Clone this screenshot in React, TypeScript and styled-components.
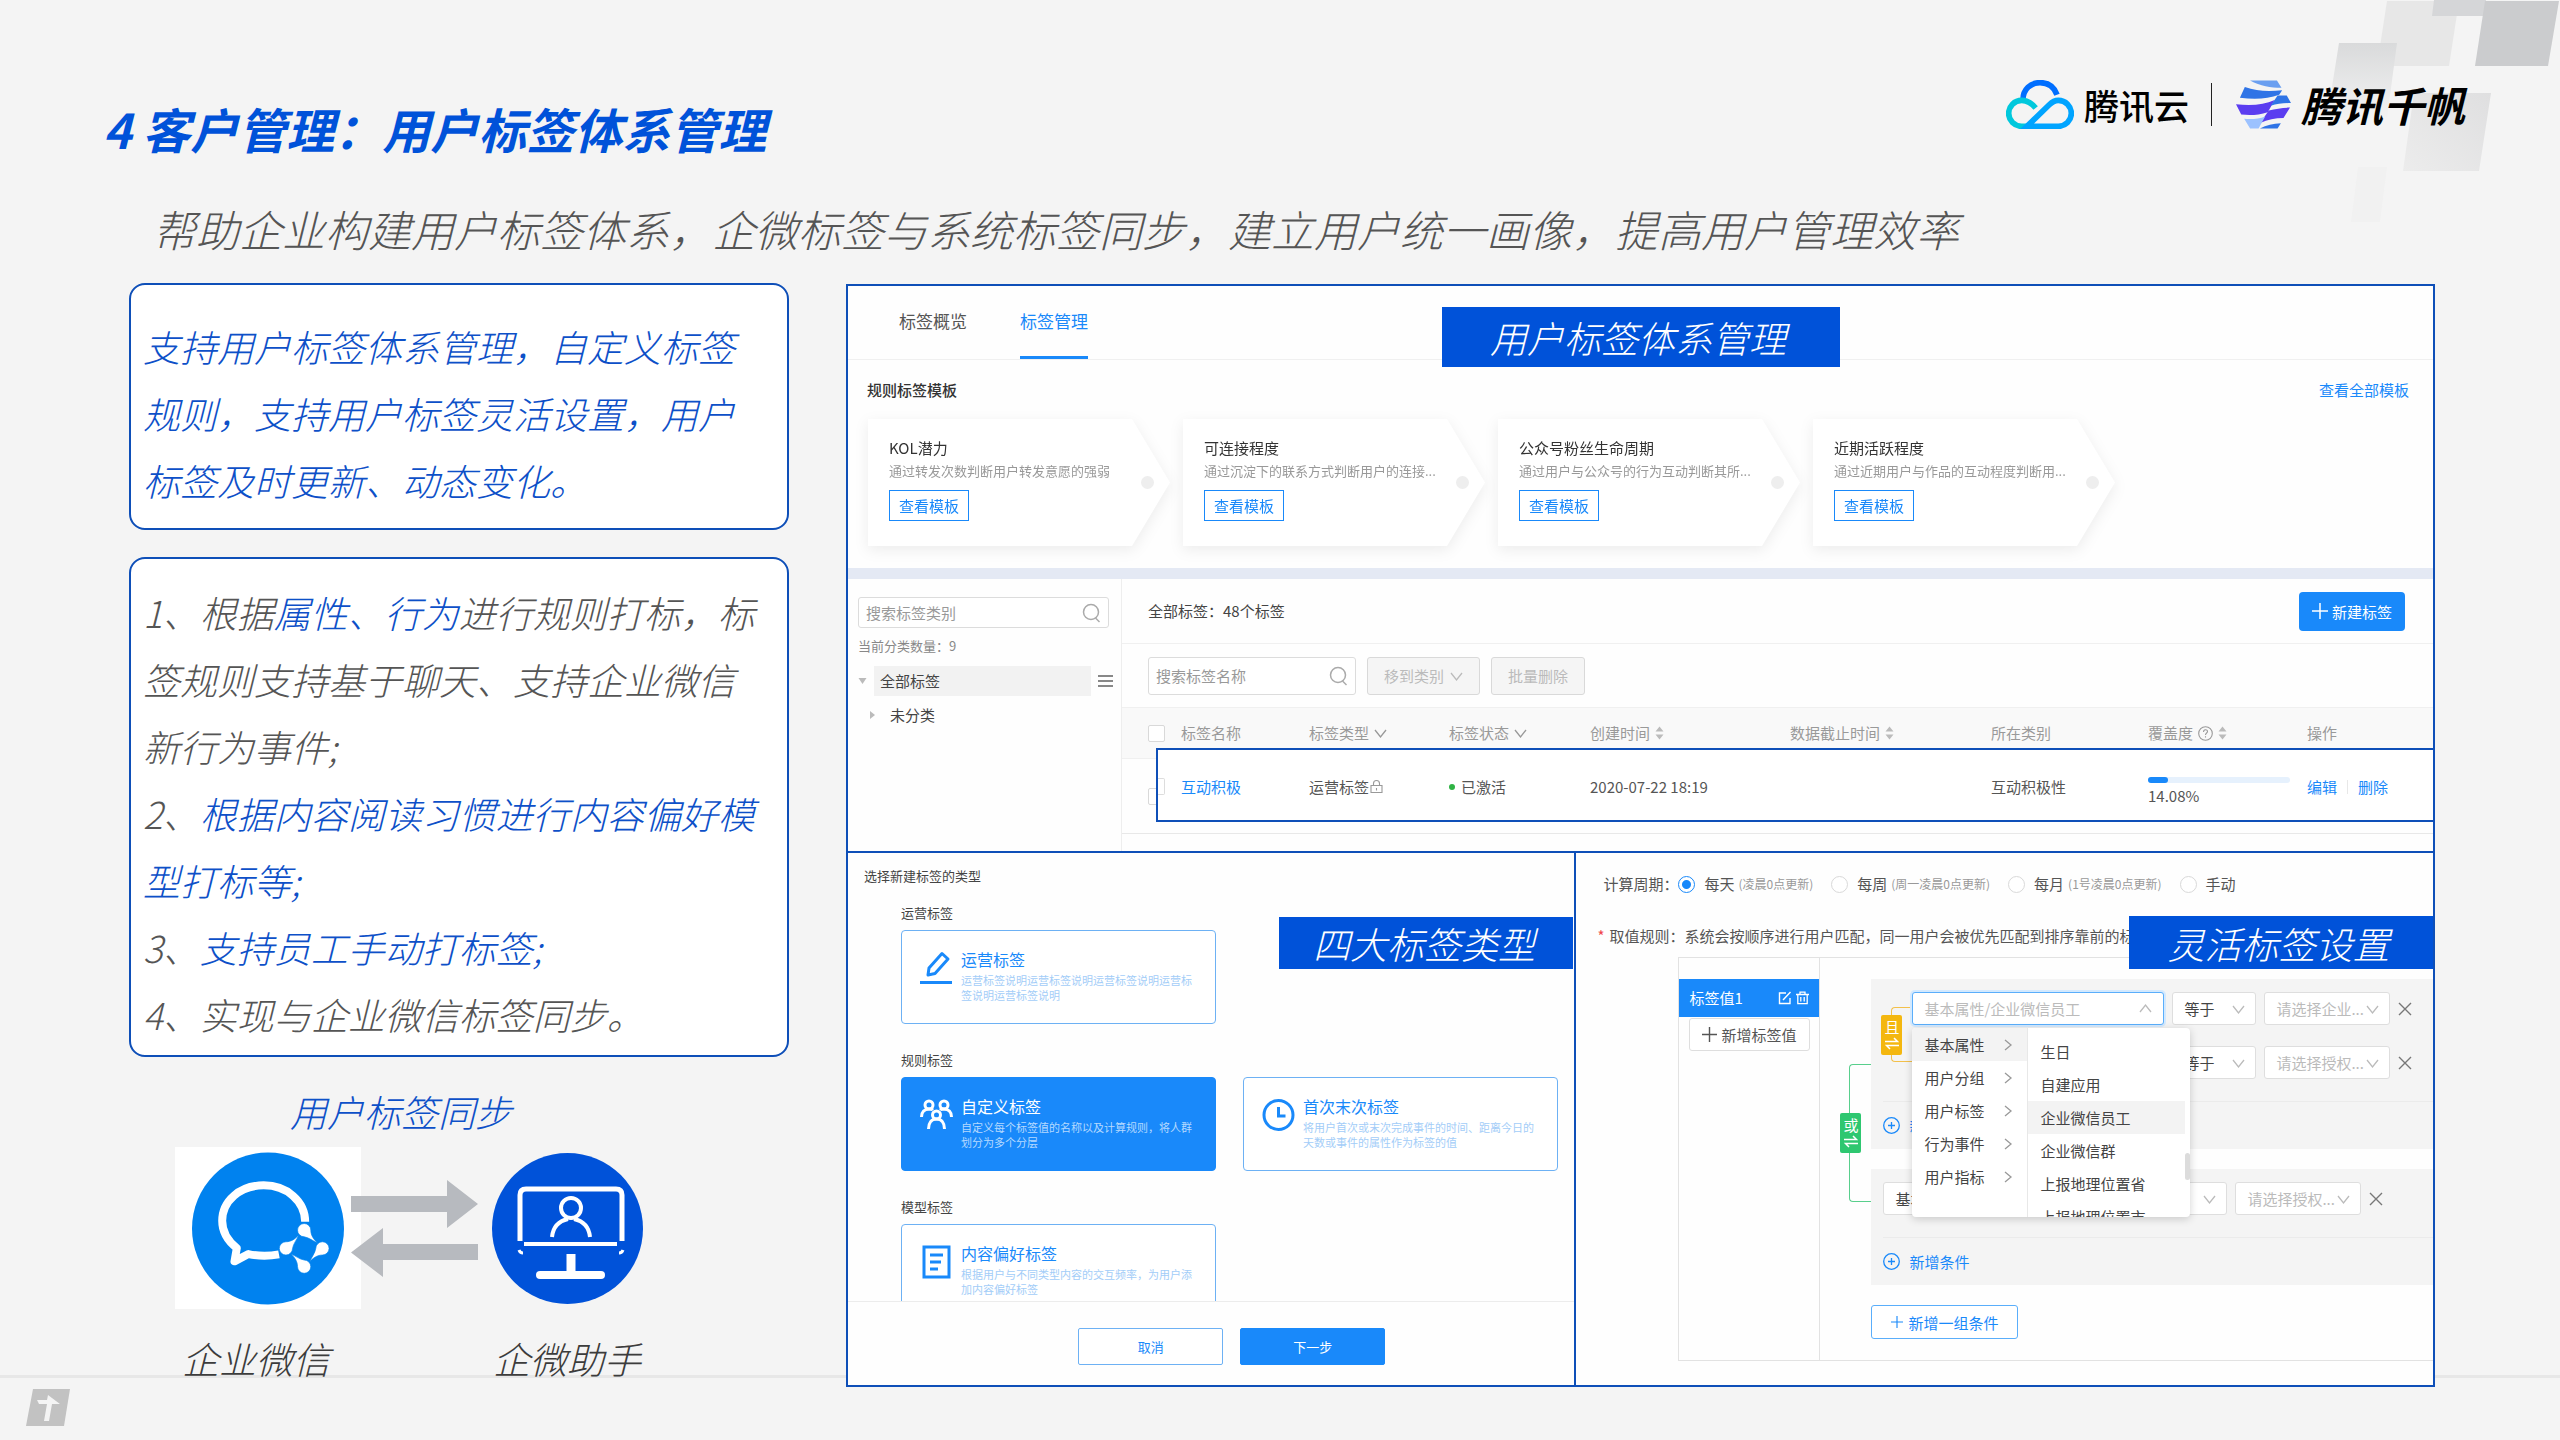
import React from "react";
import styled, { createGlobalStyle, css } from "styled-components";

const brand = "#0052d9";
const outline = "#0e4fb8";
const action = "#1989fa";

const GlobalStyle = createGlobalStyle`
  *, *::before, *::after { box-sizing: border-box; }
  body { margin: 0; background: #f4f4f4; }
  body, button, input, select {
    font-family: "Noto Sans CJK SC", "Noto Sans", sans-serif;
  }
  h1, h2, h3, p, figure, ul { margin: 0; padding: 0; }
  ul { list-style: none; }
  button { cursor: pointer; }
  a { text-decoration: none; }
`;

/* ---------- slide frame ---------- */

const Page = styled.div`
  position: relative;
  min-height: 100vh;
  overflow: hidden;
  background: #f4f4f4;
  color: #555;
`;

const Decor = styled.svg`
  position: absolute;
  top: 0;
  right: 0;
`;

const FooterRule = styled.div`
  position: absolute;
  left: 0;
  right: 0;
  bottom: 62px;
  height: 3px;
  background: #e7e7e7;
`;

const FooterMark = styled.svg`
  position: absolute;
  left: 26px;
  bottom: 13px;
`;

const Header = styled.header`
  position: relative;
  display: flex;
  justify-content: space-between;
  align-items: flex-start;
  padding: 80px 95px 0 103px;
`;

const Title = styled.h1`
  margin-top: 18px;
  font-size: 48px;
  line-height: 60px;
  font-weight: 700;
  font-style: italic;
  color: ${brand};
`;

const Brands = styled.div`
  display: flex;
  align-items: center;
  color: #000;
  white-space: nowrap;
`;

const BrandName = styled.span<{ $heavy?: boolean }>`
  margin-left: 10px;
  font-size: ${(p) => (p.$heavy ? 41 : 35)}px;
  line-height: 49px;
  font-weight: ${(p) => (p.$heavy ? 700 : 500)};
  font-style: ${(p) => (p.$heavy ? "italic" : "normal")};
`;

const BrandRule = styled.span`
  width: 1px;
  height: 43px;
  margin: 0 24px 0 22px;
  background: #222;
`;

const Subtitle = styled.p`
  position: relative;
  margin: 40px 0 0 153px;
  font-size: 43px;
  line-height: 60px;
  font-weight: 300;
  font-style: italic;
`;

const Main = styled.main`
  position: relative;
  display: flex;
  align-items: flex-start;
  gap: 57px;
  margin: 25px 125px 0 129px;
`;

const Side = styled.section`
  flex: 0 0 660px;
`;

const Note = styled.div<{ $blue?: boolean; $tight?: boolean }>`
  padding: ${(p) => (p.$tight ? "20px 0 7px 12px" : "28px 0 14px 12px")};
  border: 2px solid ${outline};
  border-radius: 16px;
  background: #fff;
  font-size: 37px;
  line-height: 67px;
  font-weight: 300;
  font-style: italic;
  white-space: nowrap;
  color: ${(p) => (p.$blue ? "#0d50c8" : "#555")};
  & + & { margin-top: 27px; }
`;

const Em = styled.span`
  color: #0d50c8;
`;

const Sync = styled.div`
  display: grid;
  grid-template-columns: 186px 131px 151px;
  align-items: center;
  margin: 24px 0 0 46px;
`;

const SyncTitle = styled.h2`
  grid-column: 1 / -1;
  padding-right: 16px;
  margin-bottom: 6px;
  font-size: 37px;
  line-height: 60px;
  font-weight: 300;
  font-style: italic;
  text-align: center;
  color: #0d50c8;
`;

const LogoTile = styled.div`
  display: flex;
  justify-content: center;
  align-items: center;
  height: 162px;
  background: #fff;
`;

const Arrows = styled.svg`
  margin-left: -10px;
`;

const SyncLabel = styled.p`
  grid-column: span 2;
  padding-left: 7px;
  margin-top: 19px;
  font-size: 37px;
  line-height: 60px;
  font-weight: 300;
  font-style: italic;
  color: #3c3c3c;
  white-space: nowrap;
  & + & { grid-column: 3; padding-left: 1px; }
`;

/* ---------- product panel ---------- */

const Board = styled.section`
  flex: 1;
  min-width: 0;
  margin-top: 1px;
  border: 2px solid ${outline};
  background: #fefefe;
  font-size: 15px;
  line-height: 22px;
`;

const Pane = styled.div`
  position: relative;
  min-width: 0;
  overflow: hidden;
`;

const Banner = styled.div<{ $kind: "top" | "types" | "rules" }>`
  position: absolute;
  z-index: 5;
  display: flex;
  justify-content: center;
  align-items: center;
  padding-right: 5px;
  background: ${brand};
  color: #fff;
  font-size: 37px;
  font-weight: 300;
  font-style: italic;
  white-space: nowrap;
  ${(p) =>
    p.$kind === "top"
      ? css`top: 21px; left: 50%; width: 398px; height: 60px; margin-left: -199px;`
      : p.$kind === "types"
      ? css`top: 64px; right: 1px; width: 294px; height: 52px;`
      : css`top: 63px; right: 0; width: 304px; height: 53px;`}
`;

const Tabs = styled.nav`
  display: flex;
  gap: 53px;
  height: 74px;
  padding-left: 51px;
  border-bottom: 1px solid #f0f0f0;
`;

const Tab = styled.a<{ $on?: boolean }>`
  height: 73px;
  font-size: 17px;
  line-height: 70px;
  color: ${(p) => (p.$on ? action : "#555")};
  border-bottom: 3px solid ${(p) => (p.$on ? action : "transparent")};
`;

const TemplateHead = styled.div`
  display: flex;
  justify-content: space-between;
  align-items: center;
  height: 59px;
  padding: 0 24px 0 19px;
`;

const TemplateTitle = styled.h2`
  font-size: 15px;
  font-weight: 500;
  color: #333;
`;

const Link = styled.a`
  color: ${action};
`;

const Templates = styled.div`
  display: flex;
  gap: 13px;
  padding: 0 0 22px 20px;
`;

const Shade = styled.div`
  flex: 0 0 302px;
  filter: drop-shadow(0 4px 7px rgba(0, 0, 0, 0.07));
`;

const Arrow = styled.article`
  position: relative;
  height: 127px;
  padding: 18px 0 0 21px;
  background: #fff;
  clip-path: polygon(0 0, calc(100% - 38px) 0, 100% 50%, calc(100% - 38px) 100%, 0 100%);
  &::after {
    content: "";
    position: absolute;
    right: 16px;
    top: 57px;
    width: 13px;
    height: 13px;
    border-radius: 50%;
    background: #eee;
  }
`;

const ArrowTitle = styled.h3`
  font-size: 15px;
  line-height: 22px;
  font-weight: 400;
  color: #333;
`;

const ArrowText = styled.p`
  width: 236px;
  font-size: 13px;
  line-height: 24px;
  color: #999;
  white-space: nowrap;
`;

const ViewButton = styled.button`
  display: block;
  height: 31px;
  margin-top: 7px;
  padding: 0 9px;
  border: 1px solid ${action};
  background: #fff;
  font-size: 15px;
  line-height: 28px;
  color: ${action};
`;

const Strip = styled.div`
  height: 11px;
  background: #e4e9f4;
`;

const Library = styled.div`
  display: flex;
  height: 272px;
`;

const Tree = styled.aside`
  flex: 0 0 274px;
  padding: 18px 12px 0 10px;
  border-right: 1px solid #eee;
  color: #444;
`;

const SearchBox = styled.label<{ $h: number; $w?: number }>`
  display: flex;
  align-items: center;
  width: ${(p) => (p.$w ? p.$w + "px" : "auto")};
  height: ${(p) => p.$h}px;
  padding: 0 7px;
  border: 1px solid #dcdcdc;
  border-radius: 3px;
  background: #fff;
  input {
    flex: 1;
    min-width: 0;
    padding: 0;
    border: 0;
    outline: 0;
    background: none;
    font-size: 15px;
    &::placeholder { color: #999; opacity: 1; }
  }
`;

const Count = styled.p`
  margin-top: 7px;
  font-size: 13px;
  color: #888;
`;

const TreeRow = styled.div<{ $child?: boolean }>`
  display: flex;
  align-items: center;
  height: 30px;
  margin: ${(p) => (p.$child ? "4px 0 0 12px" : "9px -4px 0 0")};
`;

const TreeLabel = styled.span<{ $on?: boolean }>`
  width: ${(p) => (p.$on ? "217px" : "auto")};
  height: 30px;
  margin-left: ${(p) => (p.$on ? 7 : 9)}px;
  padding-left: 6px;
  line-height: 30px;
  background: ${(p) => (p.$on ? "#f2f2f2" : "none")};
`;

const MenuIcon = styled.svg`
  margin-left: auto;
`;

const Detail = styled.div`
  flex: 1;
  min-width: 0;
`;

const DetailHead = styled.div`
  display: flex;
  justify-content: space-between;
  align-items: center;
  height: 65px;
  padding: 0 28px 0 26px;
  border-bottom: 1px solid #f0f0f0;
  color: #444;
`;

const CreateButton = styled.button`
  display: flex;
  align-items: center;
  gap: 4px;
  height: 39px;
  padding: 0 13px;
  border: 0;
  border-radius: 4px;
  background: ${action};
  color: #fff;
  font-size: 15px;
`;

const Filters = styled.div`
  display: flex;
  align-items: center;
  gap: 11px;
  height: 63px;
  padding-left: 26px;
`;

const GreyButton = styled.button`
  display: flex;
  align-items: center;
  gap: 6px;
  height: 38px;
  padding: 0 16px;
  border: 1px solid #d9d9d9;
  border-radius: 3px;
  background: #f5f5f5;
  color: #bbb;
  font-size: 15px;
`;

const TableWrap = styled.div`
  position: relative;
`;

const Highlight = styled.div`
  position: absolute;
  z-index: 1;
  top: 41px;
  left: 34px;
  right: 0;
  height: 74px;
  border: 2px solid ${outline};
  border-right: 0;
  background: #fff;
  &::before {
    content: "";
    position: absolute;
    left: 0;
    top: 28px;
    width: 7px;
    height: 17px;
    border: 1px solid #ddd;
    border-left: 0;
    border-radius: 0 2px 2px 0;
  }
`;

const Table = styled.table`
  width: 100%;
  table-layout: fixed;
  border-collapse: collapse;
  th, td {
    padding: 0;
    text-align: left;
    font-weight: 400;
    white-space: nowrap;
  }
  th { height: 51px; background: #f9f9f9; color: #999; border: 1px solid #f0f0f0; border-width: 1px 0; }
  td { height: 75px; border-bottom: 1px solid #e8e8e8; color: #555; }
`;

const Cell = styled.div`
  position: relative;
  z-index: 2;
  display: flex;
  align-items: center;
  margin-bottom: 19px;
`;

const HeadCell = styled.div`
  display: flex;
  align-items: center;
  gap: 5px;
`;

const Tick = styled.input`
  appearance: none;
  display: block;
  width: 17px;
  height: 17px;
  margin: 0 0 0 26px;
  border: 1px solid #d9d9d9;
  border-radius: 2px;
  background: #fff;
`;

const Dot = styled.span`
  width: 6px;
  height: 6px;
  margin-right: 6px;
  border-radius: 50%;
  background: #2fb344;
`;

const Meter = styled.div`
  position: relative;
  z-index: 2;
  width: 142px;
  margin-bottom: 17px;
`;

const Track = styled.div`
  height: 6px;
  margin: 8px 0 2px;
  border-radius: 3px;
  background: #e6f1fd;
  div { height: 6px; border-radius: 3px; background: ${action}; }
`;

const Split = styled.span`
  width: 1px;
  height: 14px;
  margin: 0 10px;
  background: #e8e8e8;
`;

const Lower = styled.div`
  display: grid;
  grid-template-columns: 728fr 856fr;
  border-top: 2px solid ${outline};
  height: 534px;
`;

/* ---------- tag types ---------- */

const TypesPane = styled(Pane)`
  border-right: 2px solid ${outline};
`;

const TypesTitle = styled.h2`
  padding: 13px 0 0 16px;
  font-size: 13px;
  line-height: 20px;
  font-weight: 400;
  color: #444;
`;

const TypesBody = styled.div`
  height: 415px;
  padding: 17px 0 0 53px;
  overflow: hidden;
`;

const TypesGroup = styled.section`
  margin-bottom: 26px;
  h3 {
    margin-bottom: 7px;
    font-size: 13px;
    line-height: 20px;
    font-weight: 400;
    color: #444;
  }
`;

const TypesRow = styled.div`
  display: flex;
  gap: 27px;
`;

const TypeCard = styled.button<{ $on?: boolean }>`
  display: flex;
  align-items: flex-start;
  gap: 8px;
  width: 315px;
  height: 94px;
  padding: 16px 0 0 18px;
  border: 1px solid ${(p) => (p.$on ? action : "#6db1f4")};
  border-radius: 4px;
  background: ${(p) => (p.$on ? action : "#fff")};
  color: ${(p) => (p.$on ? "#fff" : action)};
  text-align: left;
  svg { flex: none; margin-top: 4px; }
  strong { display: block; font-size: 16px; line-height: 24px; font-weight: 400; }
  small {
    display: block;
    margin-top: 2px;
    font-size: 11px;
    line-height: 15px;
    white-space: nowrap;
    color: ${(p) => (p.$on ? "#b5d9ff" : "#a3cdf8")};
  }
`;

const TypesFoot = styled.footer`
  display: flex;
  justify-content: center;
  gap: 17px;
  padding: 26px 0 0 41px;
  border-top: 1px solid #ececec;
`;

const WideButton = styled.button<{ $solid?: boolean }>`
  width: 145px;
  height: 37px;
  border: 1px solid ${(p) => (p.$solid ? action : "#6db1f4")};
  border-radius: 2px;
  background: ${(p) => (p.$solid ? action : "#fff")};
  color: ${(p) => (p.$solid ? "#fff" : action)};
  font-size: 13px;
`;

/* ---------- rule settings ---------- */

const Cycle = styled.fieldset`
  display: flex;
  align-items: center;
  height: 22px;
  margin: 20px 0 0 27px;
  padding: 0;
  border: 0;
  white-space: nowrap;
`;

const Choice = styled.label`
  display: flex;
  align-items: center;
  margin-right: 18px;
  input {
    appearance: none;
    width: 17px;
    height: 17px;
    margin: 0 9px 0 0;
    border: 1px solid #d9d9d9;
    border-radius: 50%;
    background: #fff;
  }
  input:checked {
    border-color: ${action};
    background: radial-gradient(circle, ${action} 4px, #fff 5px);
  }
  small { margin-left: 4px; font-size: 12px; color: #999; }
`;

const RuleLine = styled.p`
  display: flex;
  margin: 30px 0 0 21px;
  white-space: nowrap;
  i { margin-right: 5px; font-style: normal; color: #f0454a; }
  span { flex: 0 0 69px; }
`;

const Builder = styled.div`
  display: flex;
  height: 404px;
  margin: 10px 0 0 102px;
  border: 1px solid #e2e2e2;
  border-right: 0;
`;

const Values = styled.div`
  flex: 0 0 141px;
  padding-top: 21px;
  border-right: 1px solid #e2e2e2;
`;

const ValueItem = styled.div`
  display: flex;
  align-items: center;
  height: 38px;
  padding: 0 10px;
  background: ${action};
  color: #fff;
  font-size: 15px;
  span { flex: 1; }
  svg { margin-left: 4px; }
`;

const AddValue = styled.button`
  display: flex;
  justify-content: center;
  align-items: center;
  gap: 4px;
  width: 121px;
  height: 33px;
  margin: 1px auto 0;
  border: 1px solid #dedede;
  border-radius: 3px;
  background: #fff;
  color: #555;
  font-size: 15px;
  padding: 0;
`;

const Conditions = styled.div`
  position: relative;
  flex: 1;
  min-width: 0;
  padding: 21px 0 0 51px;
`;

const Bracket = styled.div<{ $or?: boolean }>`
  position: absolute;
  left: ${(p) => (p.$or ? 29 : 20)}px;
  top: ${(p) => (p.$or ? 106 : 28)}px;
  width: 22px;
  height: ${(p) => (p.$or ? 138 : 55)}px;
  border: 1px solid ${(p) => (p.$or ? "#58cf8c" : "#f3c04a")};
  border-right: 0;
  border-radius: 4px 0 0 4px;
`;

const Joiner = styled.button<{ $or?: boolean }>`
  position: absolute;
  left: ${(p) => (p.$or ? 20 : 10)}px;
  top: ${(p) => (p.$or ? 155 : 36)}px;
  display: flex;
  flex-direction: column;
  align-items: center;
  width: 21px;
  height: 40px;
  padding: 2px 0 0;
  border: 0;
  border-radius: 2px;
  background: ${(p) => (p.$or ? "#2ec770" : "#f4b70f")};
  color: #fff;
  font-size: 15px;
  line-height: 20px;
`;

const Group = styled.div<{ $flat?: boolean }>`
  position: relative;
  margin-bottom: 20px;
  padding: 13px 0 0 ${(p) => (p.$flat ? 12 : 41)}px;
  background: #f4f4f4;
`;

const Condition = styled.div`
  display: flex;
  align-items: center;
  gap: 8px;
  margin-bottom: 21px;
`;

const Picker = styled.div<{ $w: number; $focus?: boolean }>`
  position: relative;
  flex: 0 0 ${(p) => p.$w}px;
  height: 33px;
  select {
    appearance: none;
    display: block;
    width: 100%;
    height: 33px;
    padding: 0 0 0 11px;
    border: 1px solid ${(p) => (p.$focus ? "#5aaefb" : "#dedede")};
    border-radius: 3px;
    outline: 0;
    background: #fff;
    box-shadow: ${(p) => (p.$focus ? "0 0 0 2px #d3e9fe" : "none")};
    color: #bbb;
    font-size: 15px;
  }
  svg { position: absolute; right: ${(p) => (p.$focus ? 12 : 11)}px; top: 11px; }
`;

const DarkPicker = styled(Picker)`
  select { color: #444; }
`;

const Remove = styled.button`
  display: flex;
  padding: 0;
  border: 0;
  background: none;
`;

const GroupFoot = styled.div<{ $flat?: boolean }>`
  height: 48px;
  margin-top: 22px;
  margin-left: ${(p) => (p.$flat ? 0 : -29)}px;
  border-top: 1px solid #ebebeb;
`;

const AddCondition = styled.button`
  display: flex;
  align-items: center;
  gap: 9px;
  height: 46px;
  padding: 0;
  border: 0;
  background: none;
  color: ${action};
  font-size: 15px;
`;

const AddGroup = styled.button`
  display: flex;
  justify-content: center;
  align-items: center;
  gap: 5px;
  width: 147px;
  height: 34px;
  padding: 0;
  border: 1px solid #5aaefb;
  border-radius: 3px;
  background: #fff;
  color: ${action};
  font-size: 15px;
`;

const Menu = styled.div`
  position: absolute;
  z-index: 3;
  left: 92px;
  top: 70px;
  display: flex;
  width: 278px;
  height: 189px;
  overflow: hidden;
  border-radius: 4px;
  background: #fff;
  box-shadow: 0 2px 8px rgba(0, 0, 0, 0.18);
  color: #444;
`;

const MenuColumn = styled.ul<{ $sub?: boolean }>`
  position: relative;
  flex: ${(p) => (p.$sub ? "1" : "0 0 116px")};
  padding: ${(p) => (p.$sub ? "7px 5px 0 0" : "0")};
  border-right: ${(p) => (p.$sub ? "0" : "1px solid #e8e8e8")};
  &::after {
    content: "";
    display: ${(p) => (p.$sub ? "block" : "none")};
    position: absolute;
    right: 0;
    top: 125px;
    width: 5px;
    height: 27px;
    border-radius: 3px;
    background: #dcdcdc;
  }
`;

const MenuItem = styled.li<{ $on?: boolean }>`
  display: flex;
  justify-content: space-between;
  align-items: center;
  height: 33px;
  padding: 0 13px 0 12px;
  background: ${(p) => (p.$on ? "#f3f3f3" : "transparent")};
  white-space: nowrap;
`;

/* ---------- icons ---------- */

const Lens = () => (
  <svg width="19" height="20" viewBox="0 0 19 20" fill="none" stroke="#aaa" strokeWidth="1.5">
    <circle cx="9" cy="9" r="7.5" />
    <path d="M13.5 15l4 4" />
  </svg>
);

const Chevron = ({ dir = "down", color = "#bbb" }: { dir?: "down" | "up" | "right"; color?: string }) => {
  const paths = { down: "M1 3l5.5 7L12 3", up: "M1 9l5.5-7L12 9", right: "M4 1l6 5-6 5" };
  return (
    <svg width="13" height="12" viewBox="0 0 13 12" fill="none" stroke={color} strokeWidth="1.3">
      <path d={paths[dir]} />
    </svg>
  );
};

const Sorter = () => (
  <svg width="9" height="14" viewBox="0 0 9 14" fill="#bbb">
    <path d="M4.500 0.500L8.500 5.500H0.500zM4.500 13.500L0.500 8.500H8.500z" />
  </svg>
);

const Plus = ({ size = 15 }: { size?: number }) => (
  <svg width={size} height={size} viewBox="0 0 16 16" fill="none" stroke="currentColor" strokeWidth="1.5">
    <path d="M8 0v16M0 8h16" />
  </svg>
);

const CirclePlus = () => (
  <svg width="17" height="17" viewBox="0 0 17 17" fill="none" stroke="currentColor" strokeWidth="1.3">
    <circle cx="8.500" cy="8.500" r="7.800" />
    <path d="M8.500 5v7M5 8.500h7" />
  </svg>
);

const Cross = () => (
  <svg width="14" height="14" viewBox="0 0 14 14" fill="none" stroke="#777" strokeWidth="1.4">
    <path d="M1 1l12 12M13 1L1 13" />
  </svg>
);

const Swap = () => (
  <svg width="14" height="13" viewBox="0 0 14 13" fill="none" stroke="currentColor" strokeWidth="1.5">
    <path d="M0 4.500h12.500L9 1M14 8.500H1.500L5 12" />
  </svg>
);

const CloudLogo = () => (
  <svg width="68" height="49" viewBox="36 33 202 147" fill="none" strokeWidth="17">
    <path d="M86 92C86 61 109 41 137 41c25 0 43 14 51 36" stroke="#006eff" />
    <path d="M124 117C112 102 99 94 82 94a39 39 0 0 0 0 78h22" stroke="#00c8dc" />
    <path d="M98 172l66-64c9-9 18-14 28-14a39 39 0 0 1 0 78z" stroke="#00a4ff" />
  </svg>
);

const SailLogo = () => (
  <svg width="55" height="49" viewBox="723 33 168 147">
    <path d="M766 33h82l14 22c-34 0-64-4-96-22z" fill="#6a9ff0" />
    <path d="M750 53c35 13 72 15 114 10l-9 14c-36 13-75 15-120 9z" fill="#2f74e6" />
    <path d="M723 106c47 5 85 2 118-13l-21 37c-28 9-55 10-81 7z" fill="#5b3df0" />
    <path d="M850 79h28l13 23c-24 0-42 3-62 8z" fill="#2f74e6" />
    <path d="M823 125c22-6 42-8 65-9l-20 32c-26 0-48 5-71 15z" fill="#5b3df0" />
    <path d="M748 150c24 2 45 0 64-7l-20 37h-26z" fill="#9cc2ff" />
    <path d="M796 180c20-10 40-15 64-16l-10 16z" fill="#2f74e6" />
  </svg>
);

const dropPath =
  "M402 253a20 20 0 0 1 20 20c0 16 9 28 20 38-14-5-26-16-40-18a20 20 0 0 1 0-40z";

const ChatLogo = () => (
  <svg width="152" height="153" viewBox="64 38 458 460">
    <circle cx="293" cy="268" r="229" fill="#0082ef" />
    <path
      d="M405 248C405 186 350 138 280 138c-72 0-125 47-125 107 0 35 17 61 44 82l-7 40 42-22c28 6 60 7 92 1"
      fill="none"
      stroke="#fff"
      strokeWidth="24"
      strokeLinejoin="round"
    />
    <g fill="#fff" stroke="#0082ef" strokeWidth="2">
      {[0, 90, 180, 270].map((a) => (
        <path key={a} d={dropPath} transform={`rotate(${a} 402 328)`} />
      ))}
    </g>
  </svg>
);

const AssistantLogo = () => (
  <svg width="151" height="151" viewBox="0 0 151 151" fill="none" stroke="#fff">
    <circle cx="75.500" cy="75.500" r="75.500" fill={brand} stroke="none" />
    <path d="M28 88V42q0-6 6-6h90q6 0 6 6v46" strokeWidth="5" />
    <path d="M27 97q1 3 4 3M131 97q-1 3-4 3" strokeWidth="3" />
    <path d="M32 91h93" strokeWidth="4" />
    <path d="M79 101v17" strokeWidth="9" />
    <path d="M48 122h61" strokeWidth="8" strokeLinecap="round" />
    <circle cx="79" cy="55" r="10" strokeWidth="4" />
    <path d="M60 84c1-10 7-16 16-18M98 84c-1-10-7-16-16-18" strokeWidth="4" />
  </svg>
);

const PencilIcon = () => (
  <svg width="33" height="34" viewBox="0 0 33 34" fill="none" stroke="currentColor" strokeWidth="3">
    <path d="M22 2.500l6 5.500-13 14.500-7 1.500 1-7z" strokeLinejoin="round" />
    <path d="M0 31.500h32" />
  </svg>
);

const PeopleIcon = () => (
  <svg width="33" height="34" viewBox="0 0 33 34" fill="none" stroke="currentColor" strokeWidth="3">
    <circle cx="9" cy="7" r="4" />
    <circle cx="24" cy="7" r="4" />
    <circle cx="16.500" cy="17" r="4" />
    <path d="M1.500 19c0-5 3-8 7.500-8 2 0 3 0 4 1M31.500 19c0-5-3-8-7.500-8-2 0-3 0-4 1M8.500 31c0-6 3-10 8-10s8 4 8 10" />
  </svg>
);

const ClockIcon = () => (
  <svg width="33" height="34" viewBox="0 0 33 34" fill="none" stroke="currentColor" strokeWidth="3">
    <circle cx="16.500" cy="17" r="14.500" />
    <path d="M16.500 9v9h7" />
  </svg>
);

const DocIcon = () => (
  <svg width="33" height="34" viewBox="0 0 33 34" fill="none" stroke="currentColor" strokeWidth="3">
    <rect x="4" y="2" width="25" height="30" />
    <path d="M10 10h13M10 17h11M10 24h8" />
  </svg>
);

/* ---------- data ---------- */

const templates = [
  ["KOL潜力", "通过转发次数判断用户转发意愿的强弱"],
  ["可连接程度", "通过沉淀下的联系方式判断用户的连接..."],
  ["公众号粉丝生命周期", "通过用户与公众号的行为互动判断其所..."],
  ["近期活跃程度", "通过近期用户与作品的互动程度判断用..."],
];

const columns: [number, string, React.ReactNode][] = [
  [128, "标签名称", null],
  [140, "标签类型", <Chevron key="c" color="#999" />],
  [141, "标签状态", <Chevron key="c" color="#999" />],
  [200, "创建时间", <Sorter key="s" />],
  [201, "数据截止时间", <Sorter key="s" />],
  [157, "所在类别", null],
  [159, "覆盖度", null],
];

const coverage = 14.08;

const cycles = [
  ["每天", "(凌晨0点更新)"],
  ["每周", "(周一凌晨0点更新)"],
  ["每月", "(1号凌晨0点更新)"],
  ["手动", ""],
];

const Select = ({ w, text, label, dark, focus }: { w: number; text: string; label: string; dark?: boolean; focus?: boolean }) => {
  const Shell = dark ? DarkPicker : Picker;
  return (
    <Shell $w={w} $focus={focus}>
      <select aria-label={label}>
        <option>{text}</option>
      </select>
      <Chevron dir={focus ? "up" : "down"} />
    </Shell>
  );
};

const RemoveButton = () => (
  <Remove aria-label="删除条件">
    <Cross />
  </Remove>
);

export default function App() {
  return (
    <Page>
      <GlobalStyle />
      <Decor width="240" height="230" viewBox="0 0 240 230">
        <defs>
          <linearGradient id="fadeA" x1="0" y1="0" x2="0" y2="1">
            <stop offset="0" stopColor="#d9dadb" />
            <stop offset="1" stopColor="#f3f3f3" />
          </linearGradient>
          <linearGradient id="fadeB" x1="1" y1="0" x2="0" y2="1">
            <stop offset="0" stopColor="#dfdfe0" />
            <stop offset="1" stopColor="#ececec" />
          </linearGradient>
        </defs>
        <path d="M67 1h72l-10 65H57z" fill="#e7e7e7" />
        <path d="M114 0h52l-2 16h-52z" fill="#d5d6d8" />
        <path d="M165 1h74l-11 65h-73z" fill="#cbccce" />
        <path d="M19 43h58L67 118H7z" fill="url(#fadeA)" />
        <path d="M94 93h77l-12 78H83z" fill="url(#fadeB)" />
        <path d="M38 167h29l-7 55H31z" fill="#f1f1f1" />
      </Decor>
      <FooterRule />
      <FooterMark width="45" height="38" viewBox="0 0 45 38">
        <path d="M7 0h37l-6 37H0z" fill="#c2c2c2" />
        <path d="M22 6l12 9h-8l-3 17h-5l3-17h-8l-2-4h10z" fill="#f4f4f4" />
      </FooterMark>

      <Header>
        <Title>4 客户管理：用户标签体系管理</Title>
        <Brands>
          <CloudLogo />
          <BrandName>腾讯云</BrandName>
          <BrandRule />
          <SailLogo />
          <BrandName $heavy>腾讯千帆</BrandName>
        </Brands>
      </Header>
      <Subtitle>帮助企业构建用户标签体系，企微标签与系统标签同步，建立用户统一画像，提高用户管理效率</Subtitle>

      <Main>
        <Side>
          <Note $blue>
            支持用户标签体系管理，自定义标签
            <br />
            规则，支持用户标签灵活设置，用户
            <br />
            标签及时更新、动态变化。
          </Note>
          <Note $tight>
            1、根据<Em>属性、行为</Em>进行规则打标，标
            <br />
            签规则支持基于聊天、支持企业微信
            <br />
            新行为事件;
            <br />
            2、<Em>根据内容阅读习惯进行内容偏好模</Em>
            <br />
            <Em>型打标等;</Em>
            <br />
            3、<Em>支持员工手动打标签;</Em>
            <br />
            4、实现与企业微信标签同步。
          </Note>
          <Sync>
            <SyncTitle>用户标签同步</SyncTitle>
            <LogoTile>
              <ChatLogo />
            </LogoTile>
            <Arrows width="127" height="97" viewBox="0 0 127 97" fill="#b7babf">
              <path d="M0 16h96V0l31 24-31 24V32H0zM127 64H32V48L0 72.500 32 97V80h95z" />
            </Arrows>
            <AssistantLogo />
            <SyncLabel>企业微信</SyncLabel>
            <SyncLabel>企微助手</SyncLabel>
          </Sync>
        </Side>

        <Board>
          <Pane>
            <Banner $kind="top">用户标签体系管理</Banner>
            <Tabs>
              <Tab href="#overview">标签概览</Tab>
              <Tab href="#manage" $on>
                标签管理
              </Tab>
            </Tabs>
            <TemplateHead>
              <TemplateTitle>规则标签模板</TemplateTitle>
              <Link href="#templates">查看全部模板</Link>
            </TemplateHead>
            <Templates>
              {templates.map(([name, text]) => (
                <Shade key={name}>
                  <Arrow>
                    <ArrowTitle>{name}</ArrowTitle>
                    <ArrowText>{text}</ArrowText>
                    <ViewButton>查看模板</ViewButton>
                  </Arrow>
                </Shade>
              ))}
            </Templates>
            <Strip />
            <Library>
              <Tree>
                <SearchBox $h={31}>
                  <input placeholder="搜索标签类别" aria-label="搜索标签类别" />
                  <Lens />
                </SearchBox>
                <Count>当前分类数量：9</Count>
                <TreeRow>
                  <svg width="9" height="6" viewBox="0 0 9 6" fill="#bbb">
                    <path d="M0.500 0h8l-4 6z" />
                  </svg>
                  <TreeLabel $on>全部标签</TreeLabel>
                  <MenuIcon width="15" height="12" viewBox="0 0 15 12" stroke="#888" strokeWidth="2">
                    <path d="M0 1h15M0 6h15M0 11h15" />
                  </MenuIcon>
                </TreeRow>
                <TreeRow $child>
                  <svg width="5" height="8" viewBox="0 0 5 8" fill="#bbb">
                    <path d="M0 0l5 4-5 4z" />
                  </svg>
                  <TreeLabel>未分类</TreeLabel>
                </TreeRow>
              </Tree>
              <Detail>
                <DetailHead>
                  <span>全部标签：48个标签</span>
                  <CreateButton>
                    <Plus size={16} />
                    新建标签
                  </CreateButton>
                </DetailHead>
                <Filters>
                  <SearchBox $h={38} $w={208}>
                    <input placeholder="搜索标签名称" aria-label="搜索标签名称" />
                    <Lens />
                  </SearchBox>
                  <GreyButton>
                    移到类别
                    <Chevron />
                  </GreyButton>
                  <GreyButton>批量删除</GreyButton>
                </Filters>
                <TableWrap>
                  <Highlight />
                  <Table>
                    <colgroup>
                      <col width="59" />
                      {columns.map(([w, name]) => (
                        <col key={name} width={w} />
                      ))}
                      <col />
                    </colgroup>
                    <thead>
                      <tr>
                        <th>
                          <Tick type="checkbox" aria-label="全选" />
                        </th>
                        {columns.map(([, name, icon]) => (
                          <th key={name}>
                            <HeadCell>
                              {name}
                              {icon}
                              {name === "覆盖度" && (
                                <>
                                  <svg width="15" height="15" viewBox="0 0 15 15" fill="none" stroke="#999" strokeWidth="1.1">
                                    <circle cx="7.500" cy="7.500" r="6.800" />
                                    <path d="M5.500 6c0-3 4-3 4-0.500 0 1.500-2 1.500-2 3.500M7.500 10.200v1.200" />
                                  </svg>
                                  <Sorter />
                                </>
                              )}
                            </HeadCell>
                          </th>
                        ))}
                        <th>操作</th>
                      </tr>
                    </thead>
                    <tbody>
                      <tr>
                        <td>
                          <Tick type="checkbox" aria-label="选择互动积极" />
                        </td>
                        <td>
                          <Cell>
                            <Link href="#tag">互动积极</Link>
                          </Cell>
                        </td>
                        <td>
                          <Cell>
                            运营标签
                            <svg width="15" height="15" viewBox="0 0 15 15" fill="none" stroke="#999" strokeWidth="1.1">
                              <path d="M2 6.500h11v7H2zM4.500 6.500V4.500a3 3 0 0 1 6 0v2M7.500 9v2.500" />
                            </svg>
                          </Cell>
                        </td>
                        <td>
                          <Cell>
                            <Dot />
                            已激活
                          </Cell>
                        </td>
                        <td>
                          <Cell>2020-07-22 18:19</Cell>
                        </td>
                        <td />
                        <td>
                          <Cell>互动积极性</Cell>
                        </td>
                        <td>
                          <Meter>
                            <Track>
                              <div style={{ width: `${coverage}%` }} />
                            </Track>
                            {coverage}%
                          </Meter>
                        </td>
                        <td>
                          <Cell>
                            <Link href="#edit">编辑</Link>
                            <Split />
                            <Link href="#delete">删除</Link>
                          </Cell>
                        </td>
                      </tr>
                    </tbody>
                  </Table>
                </TableWrap>
              </Detail>
            </Library>
          </Pane>

          <Lower>
            <TypesPane>
              <Banner $kind="types">四大标签类型</Banner>
              <TypesTitle>选择新建标签的类型</TypesTitle>
              <TypesBody>
                <TypesGroup>
                  <h3>运营标签</h3>
                  <TypesRow>
                    <TypeCard>
                      <PencilIcon />
                      <span>
                        <strong>运营标签</strong>
                        <small>
                          运营标签说明运营标签说明运营标签说明运营标
                          <br />
                          签说明运营标签说明
                        </small>
                      </span>
                    </TypeCard>
                  </TypesRow>
                </TypesGroup>
                <TypesGroup>
                  <h3>规则标签</h3>
                  <TypesRow>
                    <TypeCard $on>
                      <PeopleIcon />
                      <span>
                        <strong>自定义标签</strong>
                        <small>
                          自定义每个标签值的名称以及计算规则，将人群
                          <br />
                          划分为多个分层
                        </small>
                      </span>
                    </TypeCard>
                    <TypeCard>
                      <ClockIcon />
                      <span>
                        <strong>首次末次标签</strong>
                        <small>
                          将用户首次或末次完成事件的时间、距离今日的
                          <br />
                          天数或事件的属性作为标签的值
                        </small>
                      </span>
                    </TypeCard>
                  </TypesRow>
                </TypesGroup>
                <TypesGroup>
                  <h3>模型标签</h3>
                  <TypesRow>
                    <TypeCard>
                      <DocIcon />
                      <span>
                        <strong>内容偏好标签</strong>
                        <small>
                          根据用户与不同类型内容的交互频率，为用户添
                          <br />
                          加内容偏好标签
                        </small>
                      </span>
                    </TypeCard>
                  </TypesRow>
                </TypesGroup>
              </TypesBody>
              <TypesFoot>
                <WideButton>取消</WideButton>
                <WideButton $solid>下一步</WideButton>
              </TypesFoot>
            </TypesPane>

            <Pane>
              <Banner $kind="rules">灵活标签设置</Banner>
              <Cycle>
                <span>计算周期：</span>
                {cycles.map(([name, hint], i) => (
                  <Choice key={name}>
                    <input type="radio" name="cycle" defaultChecked={i === 0} />
                    {name}
                    {hint && <small>{hint}</small>}
                  </Choice>
                ))}
              </Cycle>
              <RuleLine>
                <i>*</i>
                <span>取值规则：</span>
                系统会按顺序进行用户匹配，同一用户会被优先匹配到排序靠前的标签
              </RuleLine>
              <Builder>
                <Values>
                  <ValueItem>
                    <span>标签值1</span>
                    <svg width="14" height="14" viewBox="0 0 14 14" fill="none" stroke="#fff" strokeWidth="1.4">
                      <path d="M8 2H1.500v10.500H12V7M5 9l7.500-8" />
                    </svg>
                    <svg width="13" height="14" viewBox="0 0 13 14" fill="none" stroke="#fff" strokeWidth="1.3">
                      <path d="M0 3.500h13M4 3.500V1.200h5v2.300M1.800 3.500v9.200h9.400V3.500M4.800 6v4.500M8.200 6v4.500" />
                    </svg>
                  </ValueItem>
                  <AddValue>
                    <Plus />
                    新增标签值
                  </AddValue>
                </Values>
                <Conditions>
                  <Bracket $or />
                  <Joiner $or>
                    或
                    <Swap />
                  </Joiner>
                  <Group>
                    <Bracket />
                    <Joiner>
                      且
                      <Swap />
                    </Joiner>
                    <Condition>
                      <Select w={252} text="基本属性/企业微信员工" label="条件属性" focus />
                      <Select w={84} text="等于" label="关系" dark />
                      <Select w={126} text="请选择企业..." label="取值" />
                      <RemoveButton />
                    </Condition>
                    <Condition>
                      <Select w={252} text="基本属性" label="条件属性" dark />
                      <Select w={84} text="等于" label="关系" dark />
                      <Select w={126} text="请选择授权..." label="取值" />
                      <RemoveButton />
                    </Condition>
                    <GroupFoot>
                      <AddCondition>
                        <CirclePlus />
                        新增条件
                      </AddCondition>
                    </GroupFoot>
                  </Group>
                  <Group $flat>
                    <Condition>
                      <Select w={252} text="基本属性" label="条件属性" dark />
                      <Select w={84} text="等于" label="关系" dark />
                      <Select w={126} text="请选择授权..." label="取值" />
                      <RemoveButton />
                    </Condition>
                    <GroupFoot $flat>
                      <AddCondition>
                        <CirclePlus />
                        新增条件
                      </AddCondition>
                    </GroupFoot>
                  </Group>
                  <AddGroup>
                    <Plus size={12} />
                    新增一组条件
                  </AddGroup>
                  <Menu>
                    <MenuColumn>
                      {["基本属性", "用户分组", "用户标签", "行为事件", "用户指标"].map((name, i) => (
                        <MenuItem key={name} $on={i === 0}>
                          {name}
                          <Chevron dir="right" color="#999" />
                        </MenuItem>
                      ))}
                    </MenuColumn>
                    <MenuColumn $sub>
                      {["生日", "自建应用", "企业微信员工", "企业微信群", "上报地理位置省", "上报地理位置市"].map((name) => (
                        <MenuItem key={name} $on={name === "企业微信员工"}>
                          {name}
                        </MenuItem>
                      ))}
                    </MenuColumn>
                  </Menu>
                </Conditions>
              </Builder>
            </Pane>
          </Lower>
        </Board>
      </Main>
    </Page>
  );
}
